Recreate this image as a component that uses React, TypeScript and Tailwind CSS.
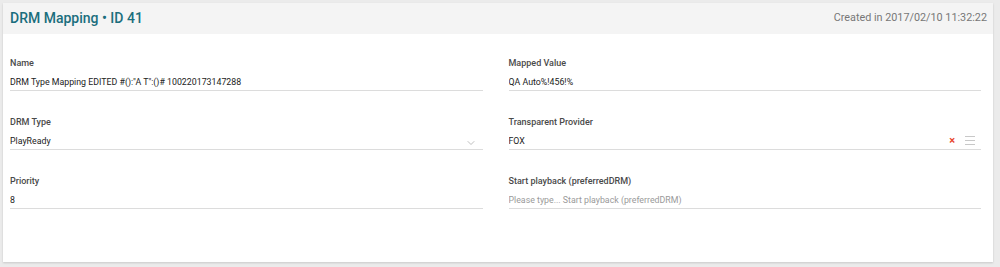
import { ChevronDown } from "lucide-react";

function Field({
  label,
  value,
  placeholder,
  right,
}: {
  label: string;
  value?: string;
  placeholder?: string;
  right?: React.ReactNode;
}) {
  return (
    <div className="flex flex-col">
      <label className="text-[9px] font-medium leading-[14px] text-[#4a4a4a]">{label}</label>
      <div className="mt-[3px] flex h-[18px] items-center border-b border-[#dcdcdc]">
        <span
          className={
            "flex-1 truncate text-[8.8px] leading-[14px] " +
            (value ? "text-[#222]" : "text-[#9a9a9a]")
          }
        >
          {value ?? placeholder}
        </span>
        {right}
      </div>
    </div>
  );
}

export default function App() {
  return (
    <div className="h-[267px] w-[1000px] bg-[#ebebeb] p-[3px] pr-[7px] font-['Roboto',sans-serif]">
      <div className="flex h-[259px] flex-col bg-white shadow-[0_1px_2px_rgba(0,0,0,0.15)]">
        {/* Header */}
        <div className="flex h-[31px] items-center justify-between bg-[#f4f4f4] pl-[7px] pr-[6px]">
          <h1 className="text-[14px] font-medium text-[#1b6e7d]">DRM Mapping • ID 41</h1>
          <span className="text-[10.8px] text-[#777]">Created in 2017/02/10 11:32:22</span>
        </div>

        {/* Form */}
        <div className="grid grid-cols-2 gap-x-[26px] gap-y-[24px] pl-[7px] pr-[12px] pt-[22px]">
          <Field label="Name" value={'DRM Type Mapping EDITED #():"A T":()# 100220173147288'} />
          <Field label="Mapped Value" value="QA Auto%!456!%" />
          <Field
            label="DRM Type"
            value="PlayReady"
            right={<ChevronDown size={12} strokeWidth={1.25} className="mr-[6px] mt-[4px] text-[#999]" />}
          />
          <Field
            label="Transparent Provider"
            value="FOX"
            right={
              <div className="flex items-center gap-[10px] pr-[6px]">
                <span className="text-[11px] font-bold leading-none text-[#e8452c]">×</span>
                <svg width="10" height="9" viewBox="0 0 10 9" className="text-[#c8c8c8]">
                  <path d="M0 0.5h10M0 4.5h10M0 8.5h10" stroke="currentColor" strokeWidth="1" />
                </svg>
              </div>
            }
          />
          <Field label="Priority" value="8" />
          <Field label="Start playback (preferredDRM)" placeholder="Please type... Start playback (preferredDRM)" />
        </div>
      </div>
    </div>
  );
}
